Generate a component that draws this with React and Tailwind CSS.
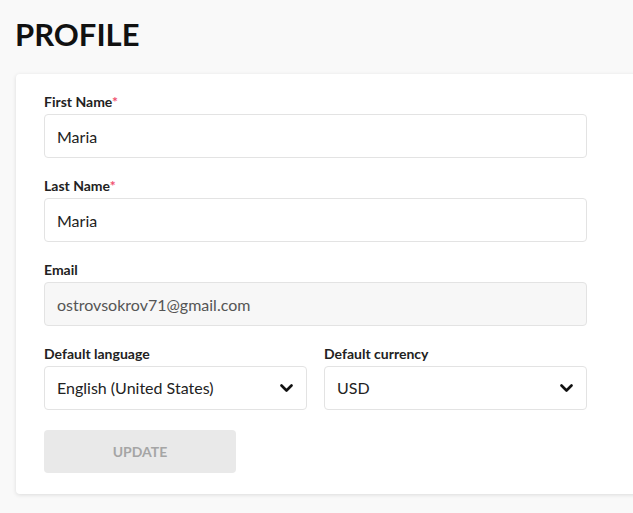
import { useState } from 'react';

function Chevron() {
  return (
    <svg width="13" height="9" viewBox="0 0 13 9" className="shrink-0">
      <polyline points="1.5,1.5 6.5,6.5 11.5,1.5" fill="none" stroke="#111" strokeWidth="2.6" strokeLinecap="round" strokeLinejoin="round" />
    </svg>
  );
}

function Field({ label, required, children }) {
  return (
    <div className="flex flex-col">
      <label className="text-[14px] leading-[18px] font-bold text-[#222] mb-[3px]">
        {label}
        {required && <span className="text-[#f0506e]">*</span>}
      </label>
      {children}
    </div>
  );
}

function Select({ value }) {
  return (
    <div className="h-[44px] flex items-center justify-between pl-[12px] pr-[13px] border border-[#e3e3e3] rounded-[4px] bg-white text-[16px] text-[#222]">
      <span>{value}</span>
      <Chevron />
    </div>
  );
}

export default function App() {
  const [first, setFirst] = useState('Maria');
  const [last, setLast] = useState('Maria');

  return (
    <div
      className="w-[633px] h-[513px] overflow-hidden bg-[#f9f9f9] pt-[15px]"
      style={{ fontFamily: 'Lato, "Noto Sans", sans-serif' }}
    >
      <h1 className="pl-[15px] text-[31px] leading-[38px] font-bold text-[#111]">PROFILE</h1>

      {/* Card */}
      <div className="mt-[21px] ml-[16px] w-[660px] bg-white rounded-[4px] shadow-[0_1px_4px_rgba(0,0,0,0.12)] pl-[28px] pt-[19px] pb-[21px]">
        <div className="w-[543px] flex flex-col gap-[19px]">
          <Field label="First Name" required>
            <input
              value={first}
              onChange={(e) => setFirst(e.target.value)}
              className="h-[44px] px-[12px] border border-[#e3e3e3] rounded-[4px] text-[16px] text-[#222] outline-none"
            />
          </Field>
          <Field label="Last Name" required>
            <input
              value={last}
              onChange={(e) => setLast(e.target.value)}
              className="h-[44px] px-[12px] border border-[#e3e3e3] rounded-[4px] text-[16px] text-[#222] outline-none"
            />
          </Field>
          <Field label="Email">
            <input
              value="ostrovsokrov71@gmail.com"
              disabled
              className="h-[44px] px-[12px] border border-[#e3e3e3] rounded-[4px] bg-[#f7f7f7] text-[16px] text-[#555] outline-none"
            />
          </Field>
          <div className="grid grid-cols-2 gap-[17px]">
            <Field label="Default language">
              <Select value="English (United States)" />
            </Field>
            <Field label="Default currency">
              <Select value="USD" />
            </Field>
          </div>
          <div>
            <button
              disabled
              className="w-[192px] h-[43px] mt-[1px] rounded-[4px] bg-[#e9e9e9] text-[14px] font-bold text-[#a5a5a5] uppercase"
            >
              Update
            </button>
          </div>
        </div>
      </div>
    </div>
  );
}
